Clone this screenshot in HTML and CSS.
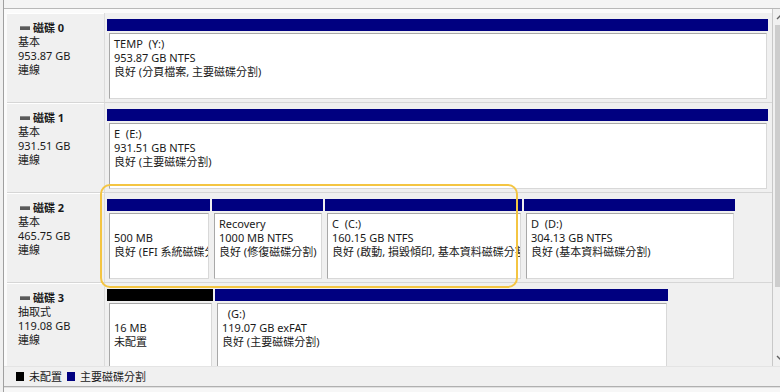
FILE: index.html
```html
<!DOCTYPE html>
<html lang="zh-Hant">
<head>
  <meta charset="UTF-8" />
  <title>磁碟管理</title>
  <link rel="stylesheet" href="styles.css">
</head>
<body>
  <div class="window">
    <div class="topstrip"></div>
    <div class="main">
      <div class="list">

        <!-- 磁碟 0 -->
        <div class="disk">
          <div class="info">
            <div class="name"><span class="disk-icon"></span>磁碟 0</div>
            <div>基本</div>
            <div>953.87 GB</div>
            <div>連線</div>
          </div>
          <div class="parts">
            <div class="part" style="width:661px">
              <div class="bar"></div>
              <div class="box">
                <div>TEMP  (Y:)</div>
                <div>953.87 GB NTFS</div>
                <div>良好 (分頁檔案, 主要磁碟分割)</div>
              </div>
            </div>
          </div>
        </div>

        <!-- 磁碟 1 -->
        <div class="disk">
          <div class="info">
            <div class="name"><span class="disk-icon"></span>磁碟 1</div>
            <div>基本</div>
            <div>931.51 GB</div>
            <div>連線</div>
          </div>
          <div class="parts">
            <div class="part" style="width:661px">
              <div class="bar"></div>
              <div class="box">
                <div>E  (E:)</div>
                <div>931.51 GB NTFS</div>
                <div>良好 (主要磁碟分割)</div>
              </div>
            </div>
          </div>
        </div>

        <!-- 磁碟 2 -->
        <div class="disk">
          <div class="info">
            <div class="name"><span class="disk-icon"></span>磁碟 2</div>
            <div>基本</div>
            <div>465.75 GB</div>
            <div>連線</div>
          </div>
          <div class="parts">
            <div class="part" style="width:103px">
              <div class="bar"></div>
              <div class="box">
                <div>&nbsp;</div>
                <div>500 MB</div>
                <div>良好 (EFI 系統磁碟分割)</div>
              </div>
            </div>
            <div class="part" style="width:111px">
              <div class="bar"></div>
              <div class="box">
                <div>Recovery</div>
                <div>1000 MB NTFS</div>
                <div>良好 (修復磁碟分割)</div>
              </div>
            </div>
            <div class="part" style="width:197px">
              <div class="bar"></div>
              <div class="box">
                <div>C  (C:)</div>
                <div>160.15 GB NTFS</div>
                <div>良好 (啟動, 損毀傾印, 基本資料磁碟分割)</div>
              </div>
            </div>
            <div class="part" style="width:211px">
              <div class="bar"></div>
              <div class="box">
                <div>D  (D:)</div>
                <div>304.13 GB NTFS</div>
                <div>良好 (基本資料磁碟分割)</div>
              </div>
            </div>
          </div>
        </div>

        <!-- 磁碟 3 -->
        <div class="disk">
          <div class="info">
            <div class="name"><span class="disk-icon"></span>磁碟 3</div>
            <div>抽取式</div>
            <div>119.08 GB</div>
            <div>連線</div>
          </div>
          <div class="parts">
            <div class="part unalloc" style="width:106px">
              <div class="bar"></div>
              <div class="box">
                <div>&nbsp;</div>
                <div>16 MB</div>
                <div>未配置</div>
              </div>
            </div>
            <div class="part" style="width:453px">
              <div class="bar"></div>
              <div class="box">
                <div>  (G:)</div>
                <div>119.07 GB exFAT</div>
                <div>良好 (主要磁碟分割)</div>
              </div>
            </div>
          </div>
        </div>

        <div class="highlight"></div>
      </div>

      <div class="scrollbar">
        <svg class="arrow" width="17" height="16" viewBox="0 0 17 16">
          <polyline points="4,10 8.5,5.5 13,10" fill="none" stroke="#606060" stroke-width="1.4"/>
        </svg>
        <div class="thumb"></div>
        <div class="track"></div>
        <svg class="arrow" width="17" height="16" viewBox="0 0 17 16">
          <polyline points="4,6 8.5,10.5 13,6" fill="none" stroke="#606060" stroke-width="1.4"/>
        </svg>
      </div>
    </div>

    <div class="legend">
      <span class="swatch black"></span><span>未配置</span>
      <span class="swatch navy"></span><span>主要磁碟分割</span>
    </div>
    <div class="bottom"></div>
  </div>
</body>
</html>
```

FILE: styles.css
```css
html, body {
  margin: 0;
  overflow: hidden;
}
body {
  width: 780px;
  height: 392px;
  background: #f0f0f0;
  font-family: "Noto Sans", "Noto Sans CJK TC", sans-serif;
  font-size: 11px;
  line-height: 14px;
  color: #1a1a1a;
}
.window {
  width: 786px;
  margin-left: 3px;
  border-left: 1px solid #a0a0a0;
}
.topstrip {
  height: 8px;
  background: #f4f4f4;
  border-bottom: 1px solid #b8b8b8;
}
.main {
  display: flex;
  height: 357px;
}
.list {
  position: relative;
  width: 765px;
  padding: 4px 0 0 3px;
  background: #fbfbfb;
  border-right: 1px solid #c8c8c8;
  overflow: hidden;
}
.disk {
  display: flex;
  height: 89px;
  border-bottom: 1px solid #d6d6d6;
  background: #f0f0f0;
}
.info {
  width: 86px;
  padding: 8px 0 0 11px;
  border-right: 1px solid #dcdcdc;
  box-shadow: inset 0 1px 0 #fff;
}
.name {
  font-weight: bold;
  display: flex;
  align-items: center;
}
.disk-icon {
  display: inline-block;
  width: 10px;
  height: 3px;
  margin: 0 3px 0 2px;
  background: #5a5a5a;
  border-top: 1px solid #8a8a8a;
}
.parts {
  display: flex;
  gap: 2px;
  padding: 6px 0 0 2px;
}
.part {
  display: flex;
  flex-direction: column;
  gap: 2px;
}
.bar {
  height: 12px;
  background: #000080;
}
.unalloc .bar {
  background: #000;
}
.box {
  box-sizing: border-box;
  height: 66px;
  margin: 0 1px 0 2px;
  padding: 3px 4px;
  background: #fff;
  border: 1px solid;
  border-color: #a8a8a8 #d8d8d8 #d8d8d8 #a8a8a8;
  overflow: hidden;
}
.box div {
  white-space: pre;
}
.highlight {
  position: absolute;
  left: 96px;
  top: 175px;
  width: 414px;
  height: 100px;
  border: 2px solid #f4c542;
  border-radius: 10px;
}
.scrollbar {
  width: 17px;
  display: flex;
  flex-direction: column;
  background: #f0f0f0;
}
.arrow {
  display: block;
  flex: none;
}
.thumb {
  height: 262px;
  margin-left: 2px;
  background: #cdcdcd;
}
.track {
  flex: 1;
}
.legend {
  height: 19px;
  display: flex;
  align-items: center;
  padding-left: 12px;
  border-top: 1px solid #e4e4e4;
  border-bottom: 1px solid #b0b0b0;
  background: #f0f0f0;
}
.swatch {
  width: 8px;
  height: 9px;
  margin-right: 5px;
}
.swatch.black {
  background: #000;
}
.swatch.navy {
  background: #000080;
  margin-left: 5px;
}
.bottom {
  height: 6px;
  background: #f7f7f7;
  border-top: 1px solid #e0e0e0;
}
```
